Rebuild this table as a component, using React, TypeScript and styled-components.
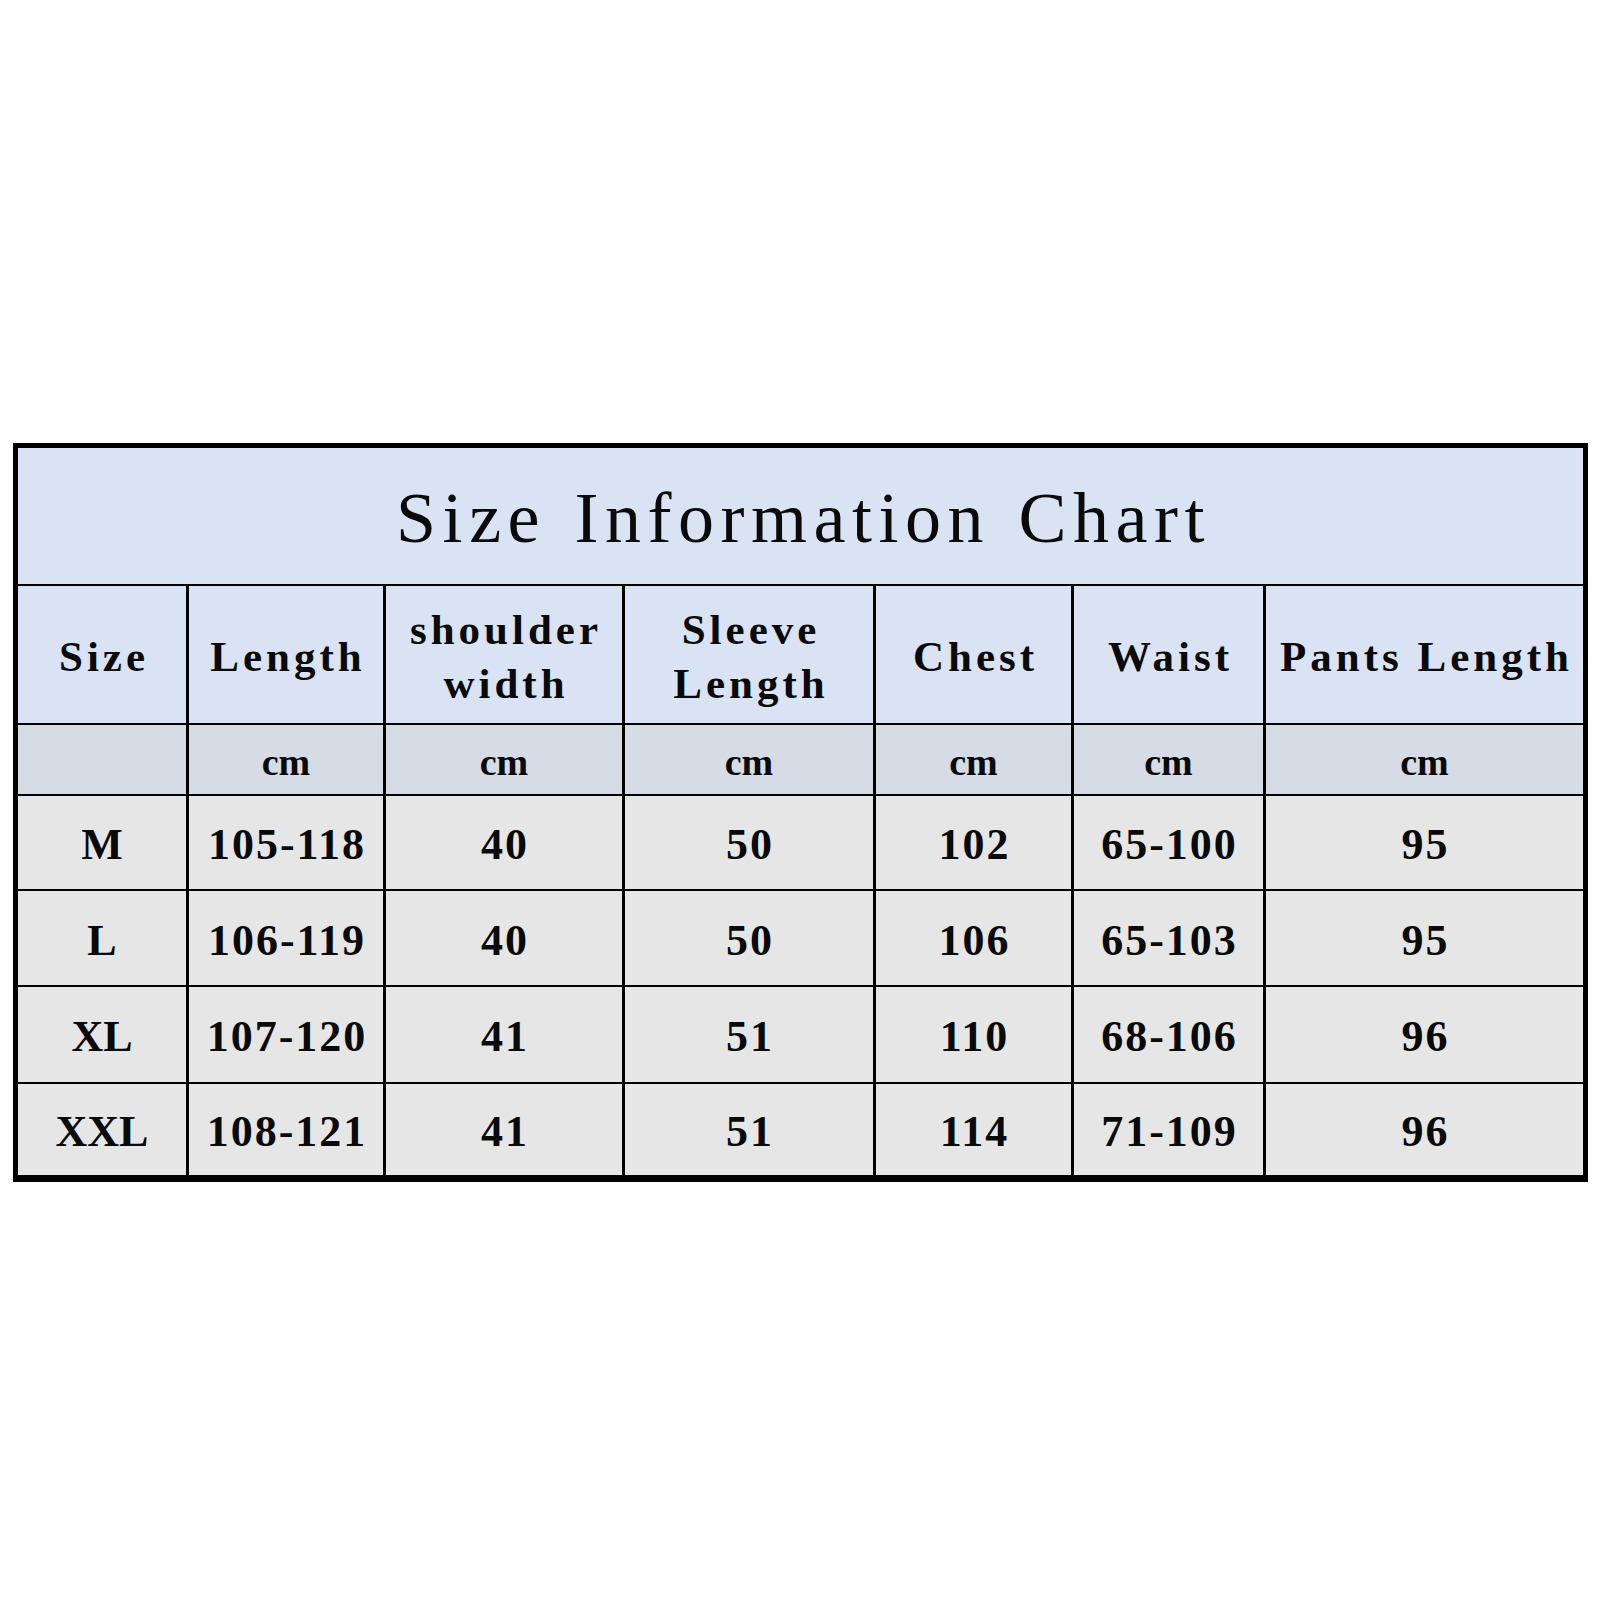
import { createGlobalStyle } from "styled-components";
import styled from "styled-components";

const GlobalStyle = createGlobalStyle`
  html, body {
    margin: 0;
    padding: 0;
    background: #ffffff;
  }
  body {
    font-family: "Liberation Serif", "Times New Roman", serif;
    color: #000;
  }
`;

const Page = styled.div`
  width: 1600px;
  height: 1600px;
  padding: 443px 0 0 13px;
  box-sizing: border-box;
`;

// black background + gaps draw the grid lines
const Chart = styled.div`
  width: 1575px;
  box-sizing: border-box;
  background: #000;
  padding: 5px 5px 7px 5px;
  display: grid;
  grid-template-columns: 168px 194px 236px 248px 195px 189px 317px;
  grid-template-rows: 136px 137px 69px 93px 94px 95px 91px;
  column-gap: 3px;
  row-gap: 2px;
`;

const Cell = styled.div`
  display: flex;
  align-items: center;
  justify-content: center;
  text-align: center;
  color: #0a0a0a;
  font-family: "Liberation Serif", "Times New Roman", serif;
`;

const TitleCell = styled(Cell)`
  grid-column: 1 / -1;
  background: #dae3f3;
  font-size: 72px;
  font-weight: 400;
  letter-spacing: 6.5px;
  word-spacing: 4px;
  padding-left: 6px;
  padding-top: 4px;
`;

const HeaderCell = styled(Cell)`
  background: #dae3f3;
  font-size: 43px;
  font-weight: 700;
  letter-spacing: 4px;
  line-height: 54px;
  padding-left: 4px;
  padding-top: 4px;
  flex-direction: column;
  white-space: nowrap;
`;

const UnitCell = styled(Cell)`
  background: #d6dce5;
  font-size: 38px;
  font-weight: 700;
  padding-top: 4px;
`;

const DataCell = styled(Cell)<{ $tight?: boolean }>`
  background: #e7e6e6;
  font-size: 44px;
  font-weight: 700;
  letter-spacing: ${(p) => (p.$tight ? "0px" : "2px")};
  padding-left: ${(p) => (p.$tight ? "0px" : "2px")};
  padding-top: 4px;
`;

const headers: string[][] = [
  ["Size"],
  ["Length"],
  ["shoulder", "width"],
  ["Sleeve", "Length"],
  ["Chest"],
  ["Waist"],
  ["Pants Length"],
];

const units = ["", "cm", "cm", "cm", "cm", "cm", "cm"];

const rows: string[][] = [
  ["M", "105-118", "40", "50", "102", "65-100", "95"],
  ["L", "106-119", "40", "50", "106", "65-103", "95"],
  ["XL", "107-120", "41", "51", "110", "68-106", "96"],
  ["XXL", "108-121", "41", "51", "114", "71-109", "96"],
];

export default function App() {
  return (
    <>
      <GlobalStyle />
      <Page>
        <Chart>
          <TitleCell>Size Information Chart</TitleCell>
          {headers.map((lines, i) => (
            <HeaderCell key={"h" + i}>
              {lines.map((line) => (
                <span key={line}>{line}</span>
              ))}
            </HeaderCell>
          ))}
          {units.map((u, i) => (
            <UnitCell key={"u" + i}>{u}</UnitCell>
          ))}
          {rows.map((row, r) =>
            row.map((value, c) => (
              <DataCell key={r + "-" + c} $tight={c === 0}>
                {value}
              </DataCell>
            ))
          )}
        </Chart>
      </Page>
    </>
  );
}
